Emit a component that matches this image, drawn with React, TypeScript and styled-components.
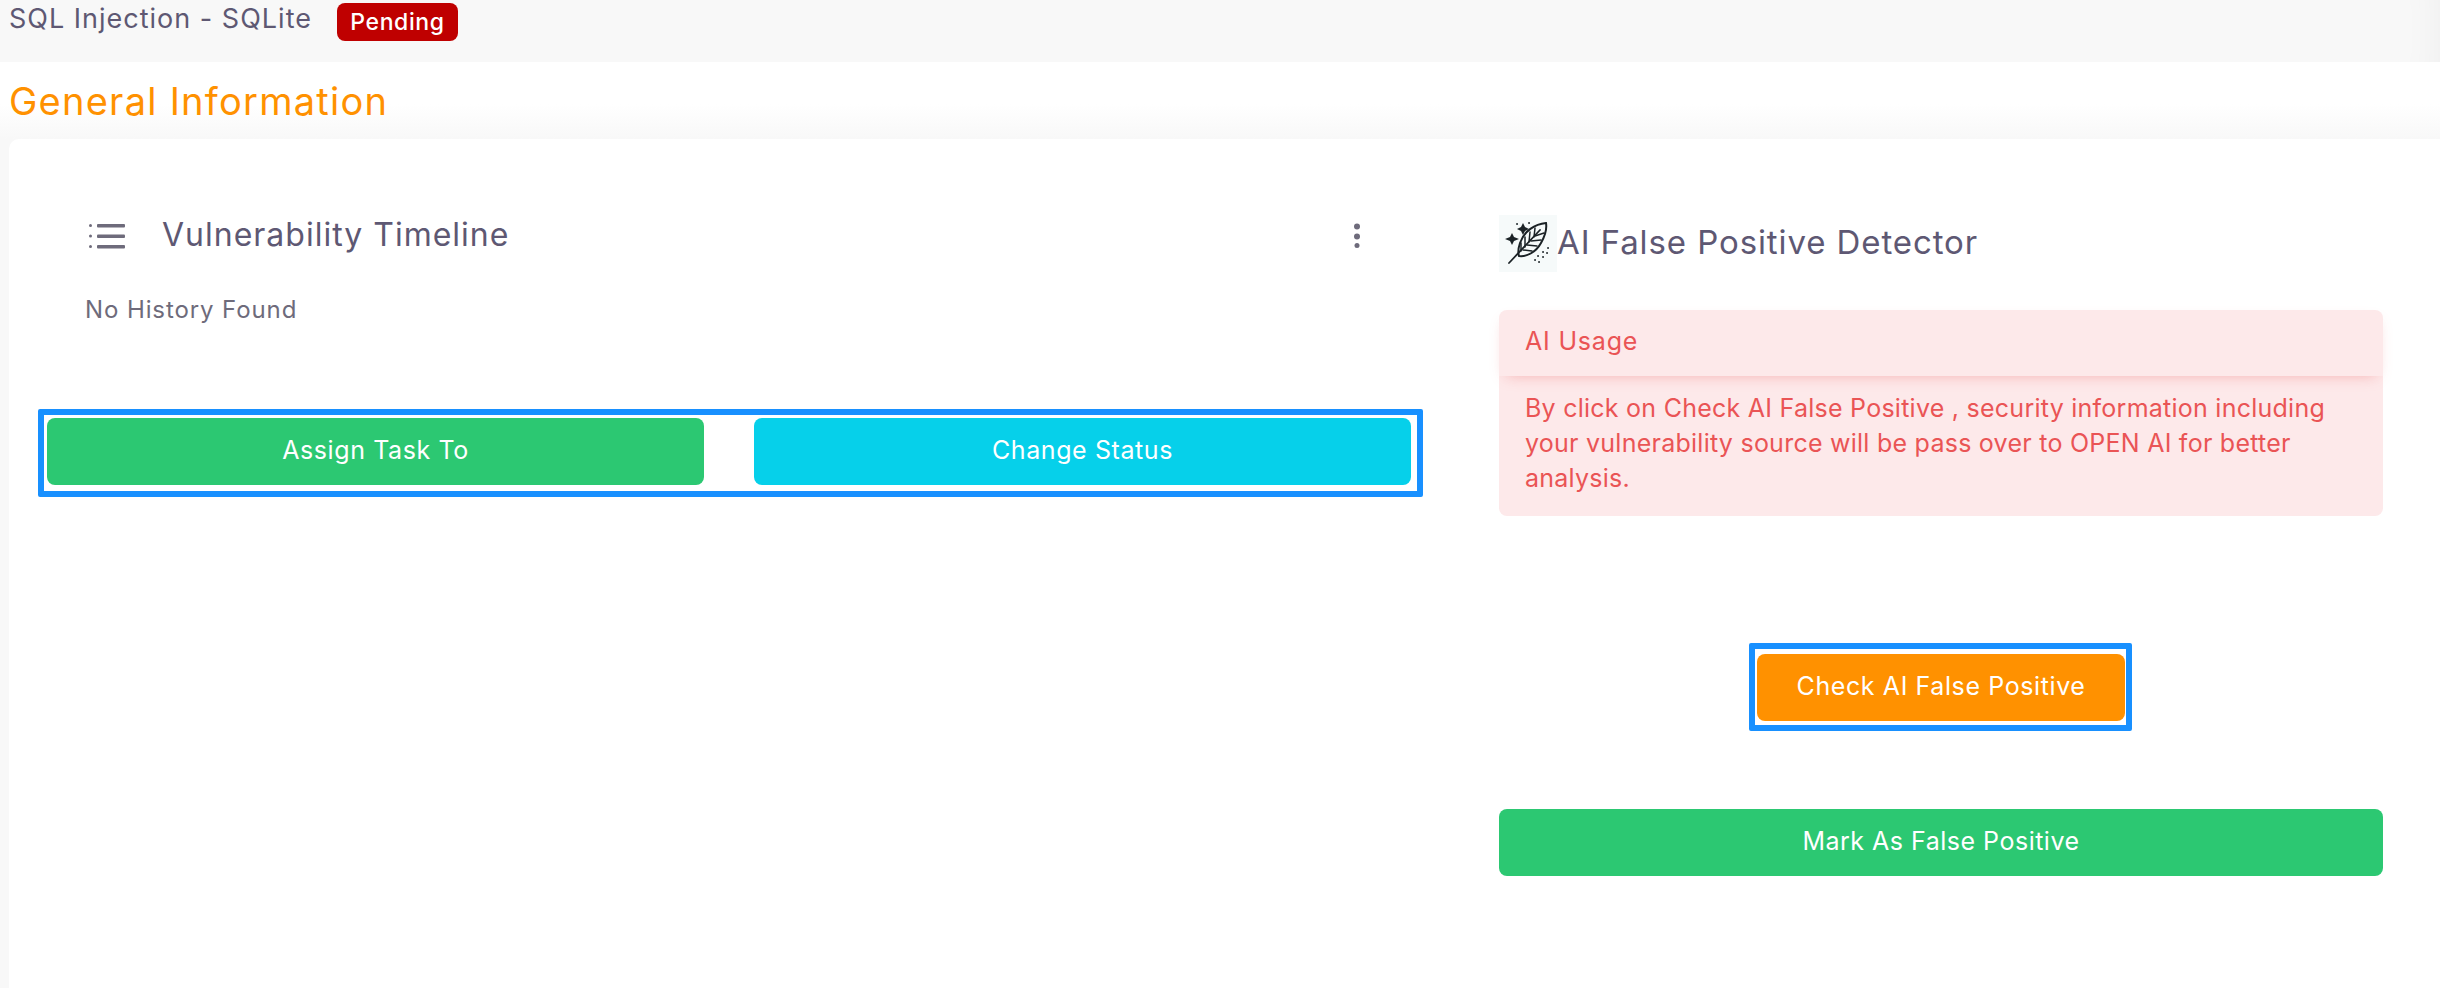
import styled, { createGlobalStyle } from 'styled-components'

const GlobalStyle = createGlobalStyle`
  html, body {
    margin: 0;
    padding: 0;
    background: #ffffff;
  }
  * {
    box-sizing: border-box;
  }
`

function FeatherIcon() {
  return (
    <svg width="58" height="57" viewBox="0 0 58 57" fill="none" stroke="#1b2226" strokeLinecap="round">
      <path d="M47 8 C36 9 25 16 21 28 C19 34 19 38 20 41 C28 42 37 37 42 28 C46 21 48 14 47 8 Z" strokeWidth="2" />
      <path d="M10 48 L41 15" strokeWidth="1.8" />
      <path d="M22 36 L22 28 M26 32 L26 22 M30 27 L31 17 M35 22 L36 13 M24 35 L33 36 M28 30 L38 31 M32 26 L42 25 M36 21 L45 18" strokeWidth="1.5" />
      <path d="M24 8 L26 12 L30 14 L26 16 L24 20 L22 16 L18 14 L22 12 Z" fill="#1b2226" stroke="none" />
      <path d="M13 18 L15 22 L20 24 L15 26 L13 30 L11 26 L6 24 L11 22 Z" fill="#1b2226" stroke="none" />
      <path d="M36 45 h.1 M40 47 h.1 M39 41 h.1 M44 42 h.1 M44 37 h.1 M48 38 h.1 M49 33 h.1 M30 8 h.1 M18 9 h.1" strokeWidth="1.8" />
    </svg>
  )
}

export default function App() {
  return (
    <Page>
      <GlobalStyle />
      <TopBar>
        <VulnName>SQL Injection - SQLite</VulnName>
        <StatusBadge>Pending</StatusBadge>
      </TopBar>
      <SectionHeading>
        <SectionTitle>General Information</SectionTitle>
      </SectionHeading>
      <Body>
        <Card>
          <LeftColumn>
            <TimelineHeader>
              <TimelineTitleGroup>
                <ListIcon viewBox="0 0 36 30">
                  <rect x="0" y="5" width="3" height="3" rx="1.5" />
                  <rect x="0" y="15.5" width="3" height="3" rx="1.5" />
                  <rect x="0" y="26" width="3" height="3" rx="1.5" />
                  <rect x="8" y="5" width="28" height="3.5" rx="1" />
                  <rect x="8" y="15.5" width="28" height="3.5" rx="1" />
                  <rect x="8" y="26" width="28" height="3.5" rx="1" />
                </ListIcon>
                <TimelineTitle>Vulnerability Timeline</TimelineTitle>
              </TimelineTitleGroup>
              <KebabIcon viewBox="0 0 8 28">
                <circle cx="4" cy="6.5" r="3" />
                <circle cx="4" cy="16.5" r="3" />
                <circle cx="4" cy="25.5" r="2.5" />
              </KebabIcon>
            </TimelineHeader>
            <EmptyHistory>No History Found</EmptyHistory>
            <ActionsFrame>
              <ActionButton $bg="#2cc872">Assign Task To</ActionButton>
              <ActionButton $bg="#06d0ea">Change Status</ActionButton>
            </ActionsFrame>
          </LeftColumn>
          <RightColumn>
            <DetectorHeader>
              <IconTile>
                <FeatherIcon />
              </IconTile>
              <DetectorTitle>AI False Positive Detector</DetectorTitle>
            </DetectorHeader>
            <Alert>
              <AlertHeading>AI Usage</AlertHeading>
              <AlertText>
                By click on Check AI False Positive , security information including your vulnerability source will be pass over to OPEN AI for better analysis.
              </AlertText>
            </Alert>
            <CheckRow>
              <CheckFrame>
                <CheckButton>Check AI False Positive</CheckButton>
              </CheckFrame>
            </CheckRow>
            <MarkButton>Mark As False Positive</MarkButton>
          </RightColumn>
        </Card>
      </Body>
    </Page>
  )
}

const Page = styled.div`
  width: 2440px;
  height: 988px;
  overflow: hidden;
  display: flex;
  flex-direction: column;
  background: #ffffff;
  font-family: 'Inter', 'Liberation Sans', sans-serif;
  color: #5e5873;
`

const TopBar = styled.header`
  height: 62px;
  flex-shrink: 0;
  padding: 3px 0 0 9px;
  display: flex;
  align-items: flex-start;
  gap: 25px;
  background: #f8f8f8;
  box-shadow: inset -40px 0 40px -40px rgba(0, 0, 0, 0.05);
`

const VulnName = styled.span`
  font-size: 27px;
  line-height: 32px;
  letter-spacing: 1px;
  color: #5e5873;
`

const StatusBadge = styled.span`
  width: 121px;
  height: 38px;
  display: flex;
  align-items: center;
  justify-content: center;
  border-radius: 8px;
  background: #bf0000;
  color: #ffffff;
  font-size: 23px;
  font-weight: 500;
  letter-spacing: 0.6px;
`

const SectionHeading = styled.div`
  height: 77px;
  flex-shrink: 0;
  padding: 16px 0 0 9px;
  background: linear-gradient(to bottom, #ffffff 55%, #f8f8f8 100%);
`

const SectionTitle = styled.h2`
  margin: 0;
  font-size: 38px;
  line-height: 46px;
  font-weight: 400;
  letter-spacing: 1.25px;
  color: #ff9100;
`

const Body = styled.main`
  flex: 1;
  padding-left: 9px;
  background: #f8f8f8;
`

const Card = styled.section`
  height: 100%;
  padding: 0 57px 0 29px;
  display: grid;
  grid-template-columns: 1385px 884px;
  justify-content: space-between;
  background: #ffffff;
  border-radius: 10px 0 0 0;
`

const LeftColumn = styled.div`
  display: flex;
  flex-direction: column;
`

const TimelineHeader = styled.div`
  height: 68px;
  margin-top: 61px;
  padding: 0 62px 0 51px;
  display: flex;
  align-items: center;
  justify-content: space-between;
`

const TimelineTitleGroup = styled.div`
  display: flex;
  align-items: center;
  gap: 37px;
`

const ListIcon = styled.svg`
  width: 36px;
  height: 30px;
  fill: #6e6b7b;
`

const TimelineTitle = styled.h3`
  margin: 0;
  font-size: 32px;
  font-weight: 400;
  letter-spacing: 1px;
  color: #5e5873;
`

const KebabIcon = styled.svg`
  width: 8px;
  height: 28px;
  fill: #6e6b7b;
`

const EmptyHistory = styled.p`
  margin: 27px 0 0 47px;
  font-size: 24px;
  line-height: 30px;
  letter-spacing: 0.9px;
  color: #6e6b7b;
`

const ActionsFrame = styled.div`
  height: 88px;
  margin-top: 84px;
  padding: 3px 6px 3px 3px;
  display: grid;
  grid-template-columns: 1fr 1fr;
  gap: 50px;
  align-items: start;
  border: 6px solid #1890ff;
  border-radius: 2px;
`

const ActionButton = styled.button<{ $bg: string }>`
  height: 67px;
  padding: 0 0 3px;
  border: 0;
  border-radius: 8px;
  background: ${(props) => props.$bg};
  color: #ffffff;
  font-family: inherit;
  font-size: 25px;
  letter-spacing: 0.6px;
`

const RightColumn = styled.div`
  display: flex;
  flex-direction: column;
`

const DetectorHeader = styled.div`
  height: 57px;
  margin-top: 76px;
  display: flex;
  align-items: center;
  gap: 0;
`

const IconTile = styled.div`
  width: 58px;
  height: 57px;
  background: #f6fafa;
`

const DetectorTitle = styled.h3`
  margin: -4px 0 0;
  font-size: 33px;
  font-weight: 400;
  letter-spacing: 0.9px;
  color: #5e5873;
`

const Alert = styled.div`
  margin-top: 38px;
  height: 206px;
  border-radius: 8px;
  background: #fde9ea;
  color: #ea5455;
`

const AlertHeading = styled.div`
  height: 66px;
  padding: 0 26px 4px;
  display: flex;
  align-items: center;
  font-size: 25px;
  letter-spacing: 0.8px;
  border-radius: 8px 8px 0 0;
  box-shadow: 0 6px 15px -7px rgba(234, 84, 85, 0.4);
`

const AlertText = styled.p`
  margin: 0;
  padding: 15px 26px 0;
  font-size: 25px;
  line-height: 35px;
  letter-spacing: 0.25px;
`

const CheckRow = styled.div`
  margin-top: 127px;
  display: flex;
  justify-content: center;
`

const CheckFrame = styled.div`
  width: 383px;
  height: 88px;
  margin-right: 1px;
  padding: 5px 1px 4px 2px;
  border: 6px solid #1890ff;
  border-radius: 2px;
`

const CheckButton = styled.button`
  width: 100%;
  height: 67px;
  padding: 0 0 4px;
  border: 0;
  border-radius: 8px;
  background: #ff9100;
  color: #ffffff;
  font-family: inherit;
  font-size: 25px;
  letter-spacing: 0.6px;
`

const MarkButton = styled.button`
  height: 67px;
  margin-top: 78px;
  padding: 0 0 4px;
  border: 0;
  border-radius: 8px;
  background: #2cc872;
  color: #ffffff;
  font-family: inherit;
  font-size: 25px;
  letter-spacing: 0.5px;
`
